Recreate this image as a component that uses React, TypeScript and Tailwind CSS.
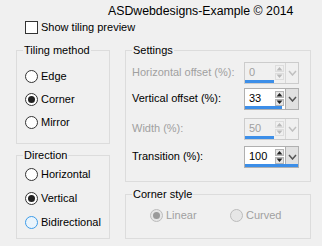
import React from "react";

const font = { fontFamily: '"Liberation Sans", Arial, sans-serif' };

function Radio({ label, checked, state = "normal", className }: { label: string; checked?: boolean; state?: "normal" | "hover" | "disabled"; className?: string }) {
  const ring =
    state === "hover" ? "border-[#3c9be8] bg-[#eaf4fc]" : state === "disabled" ? "border-[#bcbcbc] bg-[#e6e6e6]" : "border-[#333333] bg-white";
  const dot = state === "disabled" ? "bg-[#9a9a9a]" : "bg-[#222222]";
  const text = state === "disabled" ? "text-[#a0a0a0]" : "text-black";
  return (
    <div className={`flex items-center gap-[3px] h-[14px] ${className ?? ""}`}>
      <div className={`w-[13px] h-[13px] rounded-full border flex items-center justify-center ${ring}`}>
        {checked && <div className={`w-[7px] h-[7px] rounded-full ${dot}`} />}
      </div>
      <span className={`text-[11px] leading-none ${text}`}>{label}</span>
    </div>
  );
}

function Spin({ value, bar, disabled }: { value: string; bar: number; disabled?: boolean }) {
  const arrow = disabled ? "#b8b8b8" : "#222";
  return (
    <div className="flex flex-col w-[55px]">
      <div className={`flex h-[22px] border ${disabled ? "border-[#cccccc] bg-[#f0f0f0]" : "border-[#b0b0b0] bg-white"}`}>
        <div className={`flex-1 pl-[4px] pb-[2px] flex items-center text-[11px] ${disabled ? "text-[#a0a0a0]" : "text-black"}`}>{value}</div>
        <div className="w-[11px] flex flex-col items-center justify-center gap-[1px] mb-[3px] mt-[1px]">
          <svg width="9" height="7" viewBox="0 0 9 7"><rect x="0.5" y="0.5" width="8" height="6" fill={disabled ? "#f0f0f0" : "#e6e6e6"} stroke={disabled ? "#dddddd" : "#b5b5b5"} /><path d="M1.5 5.5 L4.5 2 L7.5 5.5 Z" fill={arrow} /></svg>
          <svg width="9" height="7" viewBox="0 0 9 7"><rect x="0.5" y="0.5" width="8" height="6" fill={disabled ? "#f0f0f0" : "#e6e6e6"} stroke={disabled ? "#dddddd" : "#b5b5b5"} /><path d="M1.5 1.5 L4.5 5 L7.5 1.5 Z" fill={arrow} /></svg>
        </div>
        <div className={`w-[13px] flex items-center justify-center border-l ${disabled ? "border-[#d8d8d8] bg-[#f0f0f0]" : "border-[#adadad] bg-[#e1e1e1]"}`}>
          <svg width="9" height="6" viewBox="0 0 9 6"><path d="M1 1 L4.5 5 L8 1" fill="none" stroke={disabled ? "#c0c0c0" : "#555"} strokeWidth="1.5" /></svg>
        </div>
      </div>
      <div className="h-[3px] -mt-[4px] ml-[1px] bg-[#3c8ee8]" style={{ width: bar }} />
      <div className="h-[1px]" />
    </div>
  );
}

function Group({ title, className, children }: { title: string; className?: string; children: React.ReactNode }) {
  return (
    <fieldset className={`border border-[#dcdcdc] ${className ?? ""}`}>
      <legend className="ml-[6px] px-[1px] text-[11px] leading-[14px] text-black">{title}</legend>
      {children}
    </fieldset>
  );
}

export default function App() {
  return (
    <div className="w-[322px] h-[246px] bg-[#f0f0f0] overflow-hidden text-black" style={font}>
      <div className="pt-[4px] pl-[108px] text-[12.3px] leading-[14px]">ASDwebdesigns-Example © 2014</div>
      <div className="flex items-center gap-[3px] pl-[25px] mt-[2px] h-[14px]">
        <div className="w-[13px] h-[13px] border border-[#333333] bg-white" />
        <span className="text-[11px] leading-none">Show tiling preview</span>
      </div>
      <div className="flex gap-[15px] pl-[16px] mt-[9px]">
        <div className="flex flex-col w-[94px] gap-[4px]">
          <Group title="Tiling method" className="h-[101px]">
            <div className="flex flex-col gap-[9px] pl-[8px] pt-[12px]">
              <Radio label="Edge" />
              <Radio label="Corner" checked />
              <Radio label="Mirror" />
            </div>
          </Group>
          <Group title="Direction" className="h-[91px]">
            <div className="flex flex-col gap-[10px] pl-[8px] pt-[5px]">
              <Radio label="Horizontal" />
              <Radio label="Vertical" checked />
              <Radio label="Bidirectional" state="hover" />
            </div>
          </Group>
        </div>
        <div className="flex flex-col w-[186px] gap-[5px]">
          <Group title="Settings" className="h-[139px]">
            <div className="flex flex-col pl-[6px] pr-[11px] pt-[5px]">
              <div className="flex items-center justify-between">
                <span className="text-[11px] pb-[2px] text-[#a0a0a0]">Horizontal offset (%):</span>
                <Spin value="0" bar={29} disabled />
              </div>
              <div className="flex items-center justify-between mt-[4px]">
                <span className="text-[11px] pb-[2px]">Vertical offset (%):</span>
                <Spin value="33" bar={37} />
              </div>
              <div className="flex items-center justify-between mt-[8px]">
                <span className="text-[11px] pb-[2px] text-[#a0a0a0]">Width (%):</span>
                <Spin value="50" bar={29} disabled />
              </div>
              <div className="flex items-center justify-between mt-[6px]">
                <span className="text-[11px] pb-[2px]">Transition (%):</span>
                <Spin value="100" bar={53} />
              </div>
            </div>
          </Group>
          <Group title="Corner style" className="h-[52px]">
            <div className="flex pl-[24px] pt-[7px]">
              <Radio label="Linear" checked state="disabled" className="w-[80px]" />
              <Radio label="Curved" state="disabled" />
            </div>
          </Group>
        </div>
      </div>
    </div>
  );
}
